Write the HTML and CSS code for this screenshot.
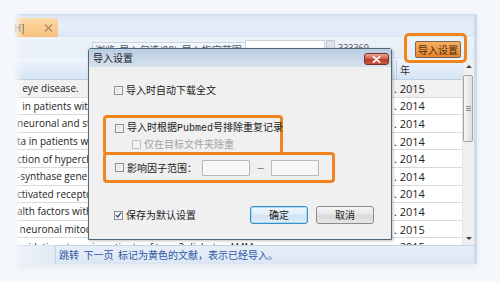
FILE: index.html
```html
<!DOCTYPE html>
<html lang="zh-CN">
<head>
<meta charset="utf-8">
<title>导入设置</title>
<link rel="stylesheet" href="styles.css">
</head>
<body>
<div class="page">
  <div class="win">
    <div class="tabbar">
      <div class="tab">
        <span class="tab-t">H]</span>
        <svg class="tab-x" width="9" height="8" viewBox="0 0 9 8"><path d="M1 0.5 L8 7.5 M8 0.5 L1 7.5" stroke="#a58868" stroke-width="1.1" fill="none"/></svg>
      </div>
    </div>
    <div class="toolbar">
      <div class="tb-left"></div>
      <div class="tb-links">浏览&nbsp; 导入勾选(99)&nbsp; 导入指定范围</div>
      <div class="tb-input">.</div>
      <div class="tb-chk"></div>
      <div class="tb-num">333369</div>
      <div class="tb-spacer"></div>
      <div class="tb-btn">导入设置</div>
    </div>
    <div class="grid">
      <div class="gmain">
        <div class="ghead">
          <div class="h-title"></div>
          <div class="h-year">年</div>
        </div>
        <div class="gbody">
          <div class="row sel"><div class="c-title">&nbsp;&nbsp;eye disease.</div><div class="c-year">. 2015</div></div>
          <div class="row"><div class="c-title">&nbsp;&nbsp;in patients with diabetes</div><div class="c-year">. 2014</div></div>
          <div class="row"><div class="c-title">neuronal and structural</div><div class="c-year">. 2014</div></div>
          <div class="row"><div class="c-title">ta in patients with</div><div class="c-year">. 2014</div></div>
          <div class="row"><div class="c-title">ction of hypercholesterolemia</div><div class="c-year">. 2014</div></div>
          <div class="row"><div class="c-title">-synthase gene</div><div class="c-year">. 2014</div></div>
          <div class="row"><div class="c-title">ctivated receptor</div><div class="c-year">. 2014</div></div>
          <div class="row"><div class="c-title">alth factors with</div><div class="c-year">. 2014</div></div>
          <div class="row"><div class="c-title">&nbsp;neuronal mitochondria</div><div class="c-year">. 2015</div></div>
          <div class="row"><div class="c-title">oxidative stress in patients of type 2 diabetes AMM</div><div class="c-year">. 2015</div></div>
        </div>
      </div>
      <div class="vscroll">
        <div class="sb-arrow"><span class="tri-up"></span></div>
        <div class="sb-track">
          <div class="sb-thumb"><span class="grip"></span><span class="grip"></span><span class="grip"></span></div>
        </div>
        <div class="sb-arrow"><span class="tri-down"></span></div>
      </div>
    </div>
    <div class="status">
      <div class="st-left"></div>
      <div class="st-text">跳转&nbsp; 下一页&nbsp; 标记为黄色的文献，表示已经导入。</div>
    </div>
  </div>

  <div class="fade"></div>
  <div class="hl hl-btn"></div>

  <div class="dialog">
    <div class="dlg-title">
      <span class="dlg-caption">导入设置</span>
      <div class="dlg-close">
        <svg width="9" height="7" viewBox="0 0 9 7"><path d="M1.5 0.8 L7.5 6.2 M7.5 0.8 L1.5 6.2" stroke="#fff" stroke-width="1.8" fill="none" stroke-linecap="round"/></svg>
      </div>
    </div>
    <div class="dlg-body">
      <div class="opt opt1"><span class="cb"></span><span class="lbl">导入时自动下载全文</span></div>
      <div class="box box1">
        <div class="opt"><span class="cb"></span><span class="lbl">导入时根据<span class="mono">Pubmed</span>号排除重复记录</span></div>
        <div class="opt sub"><span class="cb dis"></span><span class="lbl dis-t">仅在目标文件夹除重</span></div>
      </div>
      <div class="box box2">
        <div class="opt if-row">
          <span class="cb"></span><span class="lbl if-lbl">影响因子范围：</span>
          <span class="tin"></span><span class="dash">—</span><span class="tin"></span>
        </div>
      </div>
      <div class="foot">
        <div class="opt"><span class="cb on">
          <svg width="8" height="8" viewBox="0 0 8 8"><path d="M1.2 4.2 L3.1 6.3 L6.9 1.3" stroke="#2b3f6a" stroke-width="1.4" fill="none"/></svg>
        </span><span class="lbl">保存为默认设置</span></div>
        <div class="btns">
          <div class="btn def">确定</div>
          <div class="btn">取消</div>
        </div>
      </div>
    </div>
  </div>
</div>
</body>
</html>
```

FILE: styles.css
```css
* { box-sizing: border-box; }
html, body { margin: 0; padding: 0; }
body {
  width: 500px;
  height: 282px;
  overflow: hidden;
  background: #f4f7fb;
  font-family: "Noto Sans CJK SC", sans-serif;
}
.page {
  position: relative;
  width: 500px;
  height: 282px;
  padding-top: 14px;
}
.win {
  width: 477px;
  border-right: 3px solid #cddaea;
  box-shadow: 0 3px 6px rgba(120,140,170,0.12);
  background: #eaf0f8;
}

/* tab bar */
.tabbar {
  height: 23px;
  background: linear-gradient(#c9d9ee 0, #dfe8f5 2px, #e7eef8 60%, #dde7f4 100%);
  padding-top: 4px;
}
.tab {
  width: 58px;
  height: 19px;
  background: linear-gradient(#fcd9a6, #f7c07c);
  border-radius: 0 3px 0 0;
  display: flex;
  align-items: center;
  padding-left: 14px;
  font-size: 10px;
  color: #6b4a26;
}
.tab-t { width: 30px; }
.tab-x { display: block; }

/* toolbar */
.toolbar {
  height: 22px;
  display: flex;
  align-items: flex-start;
  padding-top: 3px;
  background: linear-gradient(#eef3fa, #e4ecf6);
  font-size: 10px;
  color: #333;
}
.tb-left {
  width: 93px;
  height: 18px;
  margin-top: 2px;
  background: #e9f0f8;
  border-right: 1px solid #c3d2e4;
}
.tb-links {
  width: 152px;
  height: 18px;
  margin-top: 2px;
  padding-left: 2px;
  line-height: 14px;
  background: #f3f6fb;
  border-top: 1px solid #c8d5e5;
  white-space: nowrap;
  overflow: hidden;
  color: #4a5a70;
}
.tb-input {
  width: 80px;
  height: 17px;
  background: #fff;
  border: 1px solid #c9d3de;
  padding-left: 4px;
  line-height: 10px;
}
.tb-chk {
  width: 9px;
  height: 10px;
  margin-left: 1px;
  background: #dfe4ea;
  border: 1px solid #c0c8d2;
}
.tb-num {
  margin-left: 3px;
  line-height: 16px;
  font-family: "Open Sans", sans-serif;
  font-size: 9px;
  color: #555;
}
.tb-spacer { flex: 1; }
.tb-btn {
  width: 46px;
  height: 17px;
  margin-top: 1px;
  margin-right: 13px;
  background: linear-gradient(#f6ae5e, #e9832b);
  border: 1px solid #7c6a58;
  border-radius: 2px;
  font-size: 10px;
  line-height: 15px;
  text-align: center;
  color: #4a3018;
}

/* grid */
.grid {
  display: flex;
  height: 186px;
  background: #fff;
}
.gmain {
  flex: 1;
  min-width: 0;
  display: flex;
  flex-direction: column;
}
.ghead {
  height: 21px;
  display: flex;
  background: linear-gradient(#edf3fb, #d6e4f4);
  border-bottom: 1px solid #bcd0e6;
  border-top: 1px solid #f7fafd;
}
.h-title { width: 397px; border-right: 1px solid #b9cbe0; }
.h-year {
  flex: 1;
  padding-left: 3px;
  font-size: 10px;
  line-height: 19px;
  color: #333;
}
.gbody { flex: 1; overflow: hidden; }
.row {
  height: 17.6px;
  display: flex;
  align-items: center;
  border-bottom: 1px solid #d9d9d9;
  background: #fff;
  font-family: "Open Sans", sans-serif;
  font-size: 10px;
  color: #222;
}
.row.sel { background: #f1f1f1; }
.c-title {
  width: 393px;
  padding-left: 17px;
  white-space: nowrap;
  overflow: hidden;
}
.c-year {
  flex: 1;
  padding-left: 1px;
  font-size: 11px;
  white-space: nowrap;
}

/* scrollbar */
.vscroll {
  width: 12px;
  display: flex;
  flex-direction: column;
  background: #efefef;
  border-left: 1px solid #e2e2e2;
}
.sb-arrow {
  height: 14px;
  display: flex;
  align-items: center;
  justify-content: center;
}
.tri-up {
  width: 0; height: 0;
  border-left: 3px solid transparent;
  border-right: 3px solid transparent;
  border-bottom: 3px solid #444;
}
.tri-down {
  width: 0; height: 0;
  border-left: 3px solid transparent;
  border-right: 3px solid transparent;
  border-top: 3px solid #444;
}
.sb-track { flex: 1; padding-top: 2px; }
.sb-thumb {
  width: 10px;
  height: 67px;
  margin-left: 0;
  background: linear-gradient(to right, #f7f7f7, #dedede);
  border: 1px solid #a3a3a3;
  border-radius: 2px;
  display: flex;
  flex-direction: column;
  align-items: center;
  justify-content: center;
  gap: 1px;
}
.grip { width: 5px; height: 1px; background: #8a8a8a; }

/* status bar */
.status {
  height: 19px;
  display: flex;
  background: #eaf0f8;
}
.st-left {
  width: 55px;
  background: linear-gradient(to right, #f3f6fb, #e2eaf5);
  border-top: 1px solid #d6e0ec;
}
.st-text {
  flex: 1;
  padding-left: 3px;
  background: linear-gradient(#e6eef8, #dde7f3);
  border-top: 1px solid #c5d5e8;
  border-left: 1px solid #c5d5e8;
  font-size: 10px;
  line-height: 17px;
  color: #2f56a6;
  white-space: nowrap;
}

/* left fade of the photographed window */
.fade {
  position: absolute;
  left: 0;
  top: 0;
  width: 24px;
  height: 282px;
  background: linear-gradient(to right, #f4f7fb 0, #f4f7fb 13px, rgba(244,247,251,0) 24px);
}

/* orange highlights */
.hl {
  position: absolute;
  border: 3px solid #f0841f;
  border-radius: 5px;
}
.hl-btn { left: 404px; top: 33px; width: 63px; height: 30px; }

/* dialog */
.dialog {
  position: absolute;
  left: 88px;
  top: 48px;
  width: 304px;
  height: 192px;
  border: 1px solid #4f6878;
  border-radius: 3px 3px 0 0;
  background: #f0f0f0;
  box-shadow: 1px 1px 3px rgba(0,0,0,0.25);
}
.dlg-title {
  height: 18px;
  display: flex;
  align-items: center;
  justify-content: space-between;
  padding: 0 2px 0 4px;
  background: linear-gradient(#b9cce2, #d6e2ef);
}
.dlg-caption { font-size: 10px; color: #222; line-height: 12px; }
.dlg-close {
  width: 25px;
  height: 12px;
  margin-top: 2px;
  border: 1px solid #7d2f24;
  border-radius: 3px;
  background: linear-gradient(#eaa598, #d0644f 45%, #bd3f2b 55%, #c9573f);
  display: flex;
  align-items: center;
  justify-content: center;
}
.dlg-close svg { display: block; }
.dlg-body {
  padding: 17px 17px 0 14px;
  font-size: 10px;
  color: #1b1b1b;
}
.opt {
  display: flex;
  align-items: center;
  height: 12px;
  white-space: nowrap;
}
.opt1 { margin-left: 11px; }
.cb {
  width: 9px;
  height: 9px;
  flex: none;
  border: 1px solid #8e8f8f;
  background: linear-gradient(135deg, #dcdcdc, #fbfbfb);
  box-shadow: inset 0 0 0 1px #f4f4f4;
  display: flex;
  align-items: center;
  justify-content: center;
  margin-right: 3px;
}
.cb svg { display: block; }
.cb.on { background: #fafafa; }
.cb.dis { border-color: #c4c4c4; background: #f3f3f3; box-shadow: none; }
.lbl { line-height: 12px; }
.dis-t { color: #a3a3a3; }
.mono { font-family: "Liberation Mono", monospace; font-size: 10px; }

.box {
  border: 3px solid #f0841f;
  border-radius: 4px;
}
.box1 {
  width: 180px;
  height: 40px;
  margin-top: 19px;
  padding: 4px 0 0 9px;
}
.box1 .sub { margin-top: 4px; margin-left: 17px; }
.box2 {
  width: 232px;
  height: 31px;
  margin-top: -3px;
  padding-left: 9px;
  display: flex;
  align-items: center;
}
.if-row { height: 16px; }
.if-lbl { width: 75px; }
.tin {
  width: 48px;
  height: 16px;
  background: #f7f7f7;
  border: 1px solid #b9b9b9;
  border-radius: 1px;
}
.dash {
  width: 21px;
  text-align: center;
  font-size: 8px;
  color: #333;
}
.foot {
  margin-top: 23px;
  margin-left: 11px;
  height: 18px;
  display: flex;
  align-items: center;
  justify-content: space-between;
}
.btns { display: flex; gap: 8px; }
.btn {
  width: 58px;
  height: 18px;
  border: 1px solid #8a8a8a;
  border-radius: 3px;
  background: linear-gradient(#f6f6f6, #e4e4e4 50%, #d9d9d9 51%, #e6e6e6);
  font-size: 10px;
  line-height: 16px;
  text-align: center;
  color: #1b1b1b;
}
.btn.def {
  border-color: #3c8fc4;
  box-shadow: inset 0 0 0 1px #a8dcf6;
  background: linear-gradient(#f1f8fd, #dcecf8 50%, #cde3f4 51%, #e1eef9);
}
```
